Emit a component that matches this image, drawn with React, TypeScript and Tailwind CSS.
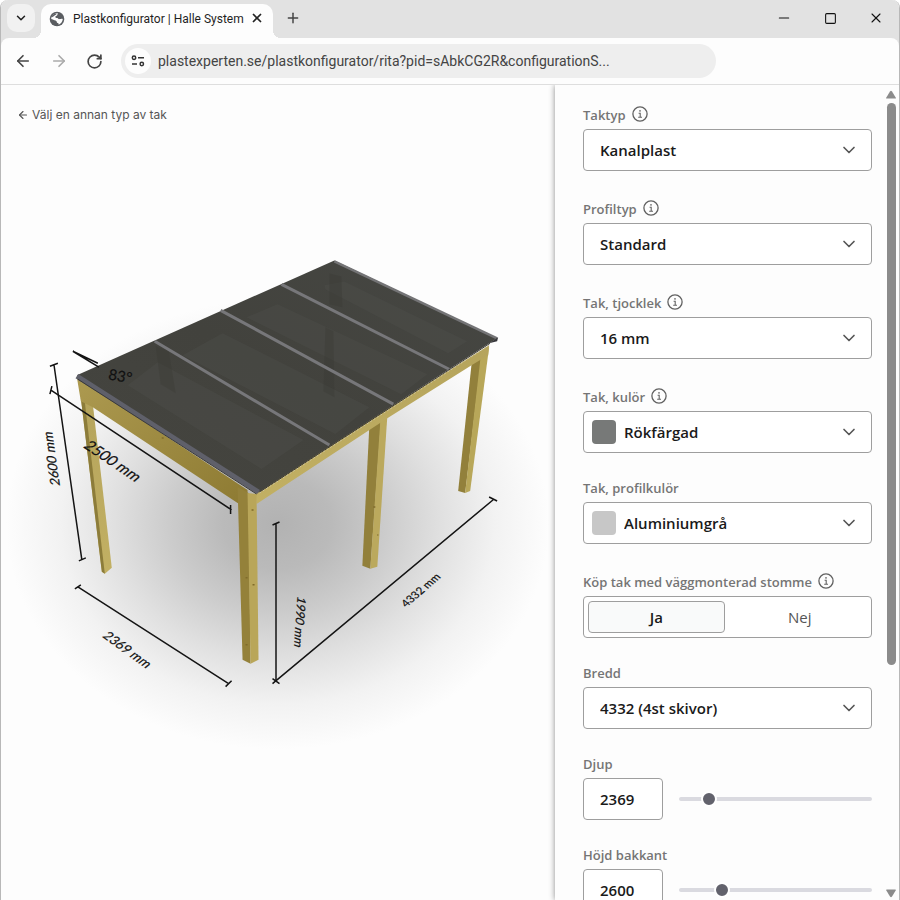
import { useState, type ReactNode } from "react";
import { ArrowLeft, ArrowRight, ChevronDown, Minus, Plus, RotateCw, Square, X } from "lucide-react";

const uiFont = "font-['Open_Sans','Noto_Sans',sans-serif]";

function InfoIcon() {
  return (
    <svg viewBox="0 0 16 16" className="size-4" fill="none" stroke="#616161" aria-hidden="true">
      <circle cx="8" cy="8" r="7.1" strokeWidth="1.3" />
      <path d="M6.6 7.2h1.6v4M6.2 11.3h3.8" strokeWidth="1.1" />
      <circle cx="8" cy="4.9" r=".8" fill="#616161" stroke="none" />
    </svg>
  );
}

function Field({ id, label, info, children }: { id: string; label: string; info?: boolean; children: ReactNode }) {
  return (
    <div className="mb-[25px]">
      <div className={`mb-[3px] flex items-end gap-1.5 ${info ? "h-6" : "h-[21px]"}`}>
        <label htmlFor={id} id={`${id}-label`} className="text-[13px] leading-[22px] font-semibold text-[#757575]">
          {label}
        </label>
        {info && (
          <button type="button" aria-label={`Info: ${label}`} className="self-center">
            <InfoIcon />
          </button>
        )}
      </div>
      {children}
    </div>
  );
}

function SelectField({ id, label, info, value, swatch }: { id: string; label: string; info?: boolean; value: string; swatch?: string }) {
  return (
    <Field id={id} label={label} info={info}>
      <div className="relative">
        <select
          id={id}
          className={`h-[42px] w-full appearance-none rounded border border-[#9e9e9e] bg-white pr-10 text-[15px] font-semibold text-[#1a1a1a] ${swatch ? "pl-10" : "pl-4"}`}
        >
          <option>{value}</option>
        </select>
        {swatch && <span className={`pointer-events-none absolute top-[9px] left-[9px] size-6 rounded ${swatch}`} />}
        <ChevronDown className="pointer-events-none absolute top-[11px] right-[13px] size-5 text-[#555]" strokeWidth={2} />
      </div>
    </Field>
  );
}

function SliderField({ id, label, initial, min, max }: { id: string; label: string; initial: number; min: number; max: number }) {
  const [value, setValue] = useState(initial);
  return (
    <Field id={id} label={label}>
      <div className="flex items-center gap-4">
        <input
          id={id}
          type="text"
          value={value}
          onChange={(e) => setValue(Number(e.target.value) || 0)}
          className="h-[42px] w-20 rounded border border-[#9e9e9e] bg-white pl-4 text-[15px] font-semibold text-[#1a1a1a]"
        />
        <input
          type="range"
          aria-label={label}
          min={min}
          max={max}
          value={value}
          onChange={(e) => setValue(Number(e.target.value))}
          className="h-4 min-w-0 flex-1 appearance-none bg-transparent [&::-webkit-slider-runnable-track]:h-1 [&::-webkit-slider-runnable-track]:rounded-full [&::-webkit-slider-runnable-track]:bg-[#dadae0] [&::-webkit-slider-thumb]:-mt-1.5 [&::-webkit-slider-thumb]:size-4 [&::-webkit-slider-thumb]:appearance-none [&::-webkit-slider-thumb]:rounded-full [&::-webkit-slider-thumb]:border-2 [&::-webkit-slider-thumb]:border-white [&::-webkit-slider-thumb]:bg-[#62626c]"
        />
      </div>
    </Field>
  );
}

function StructureToggle() {
  const [choice, setChoice] = useState("Ja");
  return (
    <Field id="stomme" label="Köp tak med väggmonterad stomme" info>
      <div role="group" aria-labelledby="stomme-label" className="flex h-[42px] gap-2 rounded border border-[#9e9e9e] bg-white p-1">
        {["Ja", "Nej"].map((option) => (
          <button
            key={option}
            id={option === "Ja" ? "stomme" : undefined}
            type="button"
            aria-pressed={choice === option}
            onClick={() => setChoice(option)}
            className={`flex-1 rounded text-[15px] ${choice === option ? "border border-[#9e9e9e] bg-[#f9fafa] font-semibold text-[#1a1a1a]" : "text-[#555]"}`}
          >
            {option}
          </button>
        ))}
      </div>
    </Field>
  );
}

function RoofModel() {
  return (
    <svg viewBox="1 85 555 815" className="min-h-0 w-full flex-1" role="img" aria-label="3D-modell av taket">
      <defs>
        <radialGradient id="floor">
          <stop offset="0" stopColor="#b2b2b2" />
          <stop offset=".2" stopColor="#bababa" />
          <stop offset=".4" stopColor="#cccccc" />
          <stop offset=".6" stopColor="#e0e0e0" />
          <stop offset=".8" stopColor="#f2f2f2" />
          <stop offset="1" stopColor="#fdfdfd" />
        </radialGradient>
        <linearGradient id="glass" x1="0" y1="1" x2="1" y2="0">
          <stop offset="0" stopColor="#454540" />
          <stop offset=".5" stopColor="#42423d" />
          <stop offset="1" stopColor="#464743" />
        </linearGradient>
        <linearGradient id="fascia" x1="0" y1="0" x2="1" y2="1">
          <stop offset="0" stopColor="#ad9a50" />
          <stop offset="1" stopColor="#8d7a32" />
        </linearGradient>
        <linearGradient id="lit" x1="0" y1="0" x2="0" y2="1">
          <stop offset="0" stopColor="#b5a45c" />
          <stop offset="1" stopColor="#c2b063" />
        </linearGradient>
      </defs>

      <ellipse cx="278" cy="524" rx="272" ry="226" fill="url(#floor)" />

      <path d="M81 398L93 404 112 568 105 574 102 572Z" fill="url(#lit)" />
      <path d="M81 398L85 402 105 574 102 572Z" fill="#8c7c3a" />
      <path d="M77 377L248 490V506L238 503 93 407 81 401Z" fill="url(#fascia)" />

      <path d="M370 426L382 416 371 569 363 566Z" fill="#92803b" />
      <path d="M381 421L388 416 378 567 371 569Z" fill="#bba95d" />
      <path d="M473 358L483 352 466 493 459 491Z" fill="#92803b" />
      <path d="M482 352L490 347 471 491 466 493Z" fill="#b8a759" />
      <path d="M256 491L490 345 489 355 474 364 388 418 257 504Z" fill="url(#lit)" />

      <path d="M238 487L249 493 251 664 243 660Z" fill="#94813a" />
      <path d="M248 493L257 494 259 660 251 664Z" fill="#b9a659" />
      <path d="M246 578h2M253 585h2M246 645h2M252 510h2M374 507h2M378 535h1M111 400h2M162 438h2" stroke="#806c2b" strokeWidth="1.5" />

      <path d="M77 375L335 260 498 338 258 493Z" fill="url(#glass)" />
      <g fill="#4d4e4a" opacity=".45">
        <path d="M183 355L223 333 370 407 336 434Z" />
        <path d="M247 317L278 304 428 374 402 394Z" />
        <path d="M128 385L158 362 304 440 262 469Z" />
        <path d="M325 285L345 281 468 341 449 353 326 289Z" />
      </g>
      <g fill="#373732" opacity=".3">
        <path d="M330 273L342 276 343 307 330 304Z" />
        <path d="M326 327L334 331 335 397 324 391Z" />
        <path d="M156 346L169 351 176 393 161 384Z" />
      </g>
      <g stroke="#77777a" strokeWidth="3" fill="none">
        <path d="M155 341L330 445M221 310L394 404M282 284L450 369" />
      </g>
      <path d="M335 261L498 338" stroke="#747476" strokeWidth="2.5" />
      <path d="M77 376L259 492" stroke="#5f606a" strokeWidth="5" />
      <path d="M78 379L257 494" stroke="#393939" strokeWidth="1" />
      <path d="M260 492L491 343" stroke="#3b3935" strokeWidth="1" />
      <path d="M260 493L490 345" stroke="#cdc49c" strokeWidth="1" strokeDasharray="2 2" />
      <path d="M490 343L499 337 498 341Z" fill="#35353a" />

      <g stroke="#141414" strokeWidth="1.5" fill="none">
        <path d="M54 364L82 560M50 366L58 363M79 561L86 558" />
        <path d="M51 390L232 510M52 386L50 394M231 505V514" />
        <path d="M98 363L73 351 99 367" />
        <path d="M78 587L229 684M75 589L81 585M226 687L232 681" />
        <path d="M276.500 524V681M273 525L280 522M273 679L280 684" />
        <path d="M273 684L495 499M490 497L498 501" />
      </g>
      <g fill="#111" stroke="#111" strokeWidth=".2" className="font-[Lato,sans-serif]">
        <text transform="translate(108 379) rotate(10)" fontSize="15">83°</text>
        <text transform="translate(83 447) rotate(34) skewX(-15)" fontSize="15">2500 mm</text>
        <text transform="translate(102 637) rotate(36) skewX(-15)" fontSize="13">2369 mm</text>
        <text transform="translate(407 608) rotate(-41) skewX(10)" fontSize="11">4332 mm</text>
        <text transform="translate(60 486) rotate(-98) skewX(-15)" fontSize="13">2600 mm</text>
        <text transform="translate(298 596) rotate(94) skewX(-15)" fontSize="12">1990 mm</text>
      </g>
    </svg>
  );
}

function BrowserChrome() {
  return (
    <header className="shrink-0 bg-[#e2e2e2]">
      <div className="flex h-[38px] items-end pr-[11px] pl-1.5">
        <button type="button" aria-label="Sök bland flikar" className="mb-1.5 flex size-7 items-center justify-center rounded-[10px] bg-[#f1f1f1]">
          <ChevronDown className="size-3.5 text-[#222]" strokeWidth={2.6} />
        </button>
        <div className="relative ml-1.5 flex h-[34px] w-[232px] items-center rounded-t-[10px] bg-[#fdfdfd] pl-2">
          <span className="absolute bottom-0 -left-2 size-2 bg-[radial-gradient(circle_at_0_0,#e2e2e2_8px,#fdfdfd_8px)]" />
          <span className="absolute -right-2 bottom-0 size-2 bg-[radial-gradient(circle_at_100%_0,#e2e2e2_8px,#fdfdfd_8px)]" />
          <svg viewBox="0 0 16 16" className="mb-1 size-4 shrink-0" aria-hidden="true">
            <circle cx="8" cy="8" r="7.3" fill="#5a5d61" />
            <path d="M9 2.200C8 3.200 9 3.900 7.900 4.500S6.200 5.200 6.400 6.200 8.300 6.500 8.900 7.300 9.700 8.500 10.900 8.100 12.600 7.400 13.800 8C13.600 10.500 12 12.800 9.600 13.700 10 12.500 9 11.700 8 11.700 7.900 10.200 7 9.400 5.500 9.200 4.500 8.600 3.300 8.400 2.200 8.100 2.200 5 5.400 1.800 9 2.200Z" fill="#fdfdfd" />
            <path d="M3.500 6.300L5.600 4.400 7.600 3.300 5.800 2.500 2.700 5Z" fill="#5a5d61" />
          </svg>
          <span className="mb-1 ml-2 font-[Roboto,sans-serif] text-xs whitespace-nowrap text-[#1f1f1f]">Plastkonfigurator | Halle System</span>
          <button type="button" aria-label="Stäng flik" className="mr-[9px] mb-1.5 ml-auto">
            <X className="size-3.5" color="#222" strokeWidth={3} />
          </button>
        </div>
        <button type="button" aria-label="Ny flik" className="mb-3 ml-3">
          <Plus className="size-4 text-[#444]" strokeWidth={2.2} />
        </button>
        <div className="mb-3 ml-auto flex items-center gap-[30px] pr-1 text-[#111]">
          <button type="button" aria-label="Minimera">
            <Minus className="size-4" strokeWidth={1.6} />
          </button>
          <button type="button" aria-label="Maximera" className="flex size-4 items-center justify-center">
            <Square className="size-[13px]" strokeWidth={2} />
          </button>
          <button type="button" aria-label="Stäng">
            <X className="size-4" strokeWidth={1.6} />
          </button>
        </div>
      </div>
      <div className="flex h-[47px] items-center rounded-t-lg border-b border-[#dedede] bg-[#fdfdfd] pl-[13px] text-[#444]">
        <button type="button" aria-label="Bakåt">
          <ArrowLeft className="size-[18px]" strokeWidth={2.2} />
        </button>
        <button type="button" aria-label="Framåt" className="ml-[18px]">
          <ArrowRight className="size-[18px] text-[#aaa]" strokeWidth={2.2} />
        </button>
        <button type="button" aria-label="Ladda om" className="ml-[18px]">
          <RotateCw className="size-[17px]" strokeWidth={2.4} />
        </button>
        <div className="ml-[18px] flex h-[34px] w-[595px] items-center rounded-full bg-[#eee] pl-1">
          <button type="button" aria-label="Webbplatsinformation" className="flex size-[26px] items-center justify-center rounded-full bg-[#fdfdfd]">
            <svg viewBox="0 0 14 14" className="size-3.5" fill="none" stroke="#333" strokeWidth="1.5" aria-hidden="true">
              <circle cx="3" cy="3.700" r="1.700" />
              <path d="M7 3.700h6M1 10h5" />
              <circle cx="10.800" cy="10" r="1.700" />
            </svg>
          </button>
          <input
            type="text"
            aria-label="Adress"
            defaultValue="plastexperten.se/plastkonfigurator/rita?pid=sAbkCG2R&configurationS..."
            className="ml-[7px] min-w-0 flex-1 bg-transparent font-[Roboto,sans-serif] text-sm text-[#444]"
          />
        </div>
      </div>
    </header>
  );
}

export default function App() {
  return (
    <div className={`flex h-screen flex-col overflow-hidden rounded-t-lg border-x border-[#b8b8b8] bg-[#fdfdfd] ${uiFont}`}>
      <BrowserChrome />
      <div className="flex min-h-0 flex-1 overflow-hidden">
        <main className="relative flex min-w-0 flex-1 flex-col">
          <RoofModel />
          <a href="#taktyper" className="absolute top-5 left-4 flex items-center gap-[3px] font-[Inter,sans-serif] text-xs leading-5 text-[#555]">
            <ArrowLeft className="size-3" strokeWidth={2.2} />
            Välj en annan typ av tak
          </a>
        </main>
        <aside className="z-10 flex w-[344px] shrink-0 bg-[#fdfdfd] shadow-[0_0_6px_rgba(0,0,0,0.45)]">
          <form className="min-w-0 flex-1 overflow-hidden pt-[17px] pr-[11px] pl-7">
            <SelectField id="taktyp" label="Taktyp" info value="Kanalplast" />
            <SelectField id="profiltyp" label="Profiltyp" info value="Standard" />
            <SelectField id="tjocklek" label="Tak, tjocklek" info value="16 mm" />
            <SelectField id="kulor" label="Tak, kulör" info value="Rökfärgad" swatch="bg-[#777978]" />
            <SelectField id="profilkulor" label="Tak, profilkulör" value="Aluminiumgrå" swatch="bg-[#c7c7c7]" />
            <StructureToggle />
            <SelectField id="bredd" label="Bredd" value="4332 (4st skivor)" />
            <SliderField id="djup" label="Djup" initial={2369} min={2000} max={4975} />
            <SliderField id="hojd" label="Höjd bakkant" initial={2600} min={2000} max={5034} />
          </form>
          <div className="flex w-4 flex-col items-center pt-1 pb-0.5" aria-hidden="true">
            <svg viewBox="0 0 10 10" className="size-2.5" fill="#8b8b8b">
              <path d="M4 2.500Q5 1 6 2.500L10 9Q10 9.500 9 9.500H1Q0 9.500 0 9Z" />
            </svg>
            <div className="mt-1 mb-1 flex min-h-0 w-[9px] flex-1 flex-col">
              <div className="h-[72%] rounded-full bg-[#8b8b8b]" />
            </div>
            <svg viewBox="0 0 10 10" className="size-2.5" fill="#8b8b8b">
              <path d="M4 8.500Q5 10 6 8.500L10 2Q10 1.500 9 1.500H1Q0 1.500 0 2Z" />
            </svg>
          </div>
        </aside>
      </div>
    </div>
  );
}
